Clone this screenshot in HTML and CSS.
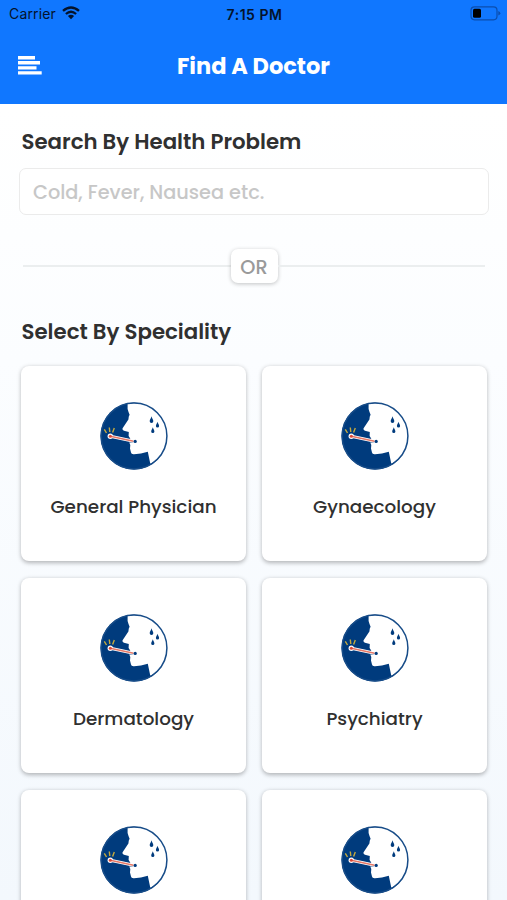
FILE: index.html
```html
<!DOCTYPE html>
<html lang="en">
<head>
<meta charset="utf-8">
<title>Find A Doctor</title>
<link rel="stylesheet" href="styles.css">
</head>
<body>
<svg class="defs" aria-hidden="true">
  <symbol id="fever" viewBox="0 0 68 68">
    <circle cx="34" cy="34" r="33.5" fill="#003b7d"/>
    <path fill="#fff" d="M27.6 2.1V7Q28.4 10 29.6 12.7 28.6 14 28.4 17.5L22.6 26.3Q22 28.2 24 28.7L28.8 30 28.6 34 30.2 36.5 29.2 40.3 30.3 43 30 46.5 31 50.5Q31.2 52.4 34 52.2 41 52 47.8 49.8L50.3 61.8A32 32 0 0 0 27.6 2.1Z"/>
    <circle cx="34" cy="34" r="32.9" fill="none" stroke="#174c88" stroke-width="1.5"/>
    <path stroke="#003b7d" stroke-width="1.2" d="M29 39.8 35 40"/>
    <path stroke="#fff" stroke-width="3.2" stroke-linecap="round" d="M10.3 34.3 33.8 39.3"/>
    <circle cx="10.3" cy="34.3" r="2.7" fill="#fff"/>
    <path stroke="#e47868" stroke-width="1.4" d="M10.3 34.3 33.5 39.2"/>
    <circle cx="10.3" cy="34.3" r="1.5" fill="#dc4937"/>
    <circle cx="35.2" cy="39.4" r="1.6" fill="#003b7d"/>
    <path stroke="#c5aa3e" stroke-width="1.4" d="M4.3 27.3 6.5 31M9.3 25.5 9.8 30M14.3 26 12.6 30.5"/>
    <path fill="#003b7d" d="M51.5 14.2C52 16.5 53.3 17.6 53.3 19.2A1.8 1.8 0 0 1 49.7 19.2C49.7 17.6 51 16.5 51.5 14.2ZM57.5 19.7C58 21.6 59.1 22.5 59.1 24A1.6 1.6 0 0 1 55.9 24C55.9 22.5 57 21.6 57.5 19.7ZM52.8 25.2C53.3 27 54.4 28 54.4 29.4A1.6 1.6 0 0 1 51.2 29.4C51.2 28 52.3 27 52.8 25.2Z"/>
  </symbol>
</svg>
<header class="header">
  <div class="status">
    <div class="carrier"><span>Carrier</span>
      <svg width="18" height="14" viewBox="0 0 18 14" fill="none" stroke="#04132b" stroke-width="2.3"><path d="M1 4.9Q9-2 17 4.9M3.9 8Q9 3.6 14.1 8"/><path fill="#04132b" stroke="none" d="M5.9 10Q9 7.5 12.1 10L9 13.2Z"/></svg>
    </div>
    <span class="time">7:15 PM</span>
    <svg class="battery" width="31" height="15" viewBox="0 0 31 15"><rect x="1" y=".8" width="26" height="13" rx="3.5" fill="none" stroke="#0b4eae" stroke-width="1.2"/><rect x="3" y="2.8" width="8" height="9" rx="1.5" fill="#000"/><path fill="#0b4eae" d="M28.3 5Q30.3 6 30.3 7.3T28.3 9.6Z"/></svg>
  </div>
  <div class="navbar">
    <svg class="menu" width="24" height="19" viewBox="0 0 24 19" fill="#fff"><path d="M0 0H17V3.4H0ZM0 5.1H22V8.5H0ZM0 10.2H18.5V13.6H0ZM0 15.2H23.7V18.6H0Z"/></svg>
    <h1 class="title">Find A Doctor</h1>
  </div>
</header>
<main class="main">
  <h2 class="heading search-heading">Search By Health Problem</h2>
  <input class="search" type="text" placeholder="Cold, Fever, Nausea etc.">
  <div class="divider"><span class="or">OR</span></div>
  <h2 class="heading select-heading">Select By Speciality</h2>
  <div class="grid">
    <div class="card"><svg class="icon"><use href="#fever"/></svg><span class="label">General Physician</span></div>
    <div class="card"><svg class="icon"><use href="#fever"/></svg><span class="label">Gynaecology</span></div>
    <div class="card"><svg class="icon"><use href="#fever"/></svg><span class="label">Dermatology</span></div>
    <div class="card"><svg class="icon"><use href="#fever"/></svg><span class="label">Psychiatry</span></div>
    <div class="card"><svg class="icon"><use href="#fever"/></svg></div>
    <div class="card"><svg class="icon"><use href="#fever"/></svg></div>
  </div>
</main>
</body>
</html>
```
FILE: styles.css
```css
* { box-sizing: border-box; }
body {
  display: flex;
  flex-direction: column;
  margin: 0;
  height: 900px;
  overflow: hidden;
  font-family: Poppins, Inter, sans-serif;
  color: #303030;
  background: linear-gradient(#fff 12%, #fbfdff 40%, #f3f8fd);
}
.defs { display: none; }
svg { display: block; }
.header { flex: none; height: 103.5px; background: #1077ff; }
.status {
  display: grid;
  grid-template-columns: 1fr auto 1fr;
  align-items: center;
  height: 28px;
  padding: 0 7px 0 9px;
  font-family: Inter, sans-serif;
  font-size: 14px;
  color: #04132b;
}
.carrier { display: flex; align-items: center; gap: 6px; margin-top: -2px; }
.carrier span { width: 47px; letter-spacing: .15px; }
.time { font-size: 14px; font-weight: 600; letter-spacing: .5px; }
.battery { justify-self: end; margin: -2px -1px 0 0; }
.navbar {
  display: grid;
  grid-template-columns: 60px 1fr 60px;
  align-items: center;
  height: 76px;
}
.menu { margin: -2px 0 0 18px; }
.title {
  margin: 0;
  text-align: center;
  font-size: 22.5px;
  font-weight: 700;
  line-height: 30px;
  color: #fff;
}
.main {
  flex: 1;
  min-height: 0;
  overflow: hidden;
  padding: 23px 20px 0 21px;
}
.heading {
  margin: 0 0 0 .5px;
  font-size: 21.3px;
  font-weight: 600;
  line-height: 30px;
}
.search {
  display: block;
  width: 470px;
  height: 47px;
  margin: 11.5px 0 0 -2px;
  padding: 1px 13px 0;
  border: 1.5px solid #ebebeb;
  border-radius: 7px;
  background: #fff;
  font: 500 19.3px Poppins, Inter, sans-serif;
}
.search::placeholder { color: #c7c7c7; opacity: 1; }
.divider {
  display: flex;
  align-items: center;
  height: 34px;
  margin: 34px 2px 0;
}
.divider::before, .divider::after { content: ""; flex: 1; height: 1.5px; background: #ebeeef; }
.or {
  width: 47px;
  height: 34px;
  border-radius: 7px;
  background: #fff;
  box-shadow: 0 1px 4px rgba(0, 0, 0, .24);
  text-align: center;
  font-size: 19.3px;
  font-weight: 500;
  line-height: 37px;
  color: #9a9a9a;
}
.select-heading { margin-top: 33.5px; }
.grid {
  display: grid;
  grid-template-columns: 1fr 1fr;
  grid-auto-rows: 195px;
  gap: 17px 16px;
  margin-top: 19.3px;
}
.card {
  display: flex;
  flex-direction: column;
  align-items: center;
  padding-top: 36px;
  border-radius: 8px;
  background: #fff;
  box-shadow: 0 1.5px 4px rgba(0, 0, 0, .28);
}
.icon { width: 68px; height: 68px; }
.label { margin-top: 24px; font-size: 18.35px; font-weight: 500; line-height: 26px; }
```
